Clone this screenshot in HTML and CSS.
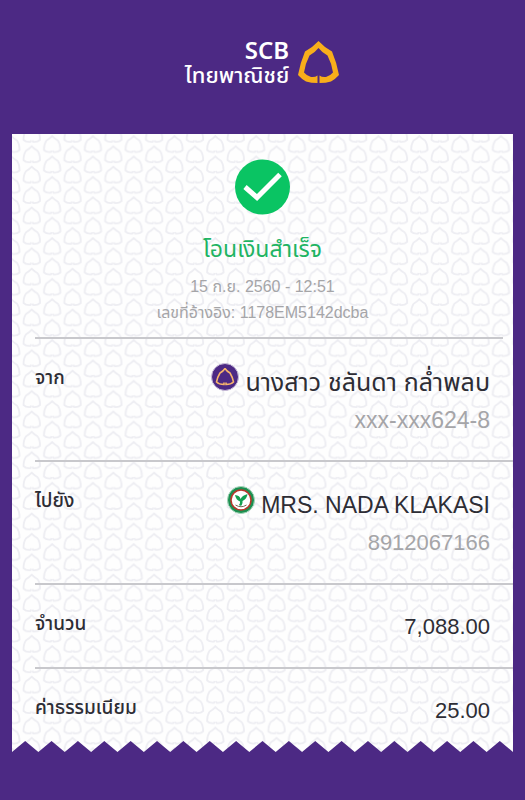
FILE: index.html
```html
<!DOCTYPE html>
<html lang="th">
<head>
<meta charset="utf-8">
<meta name="viewport" content="width=device-width, initial-scale=1">
<title>โอนเงินสำเร็จ</title>
<link rel="stylesheet" href="styles.css">
</head>
<body>
<header class="brand">
  <div class="brand-name">
    <span class="brand-en">SCB</span>
    <span class="brand-th">ไทยพาณิชย์</span>
  </div>
  <svg class="brand-mark" viewBox="0 0 42 42" aria-hidden="true">
    <path fill="#f8ae1b" d="M20.500 0Q14.500 6.500 7 10.500Q2.500 21 0 34Q3.500 38 8 40.500Q13 42 19.500 42V34.500Q17 36.500 13 36Q9 35 6 31.500Q7.500 22 11.500 14.500Q17 11.500 20.500 7Q24 11.500 29.500 14.500Q33.500 22 35 31.500Q32 35 28 36Q24 36.500 21.500 34.500V42Q28 42 33 40.500Q37.500 38 41 34Q38.500 21 34 10.500Q26.500 6.500 20.500 0Z"/>
  </svg>
</header>
<main class="slip">
  <svg class="slip-pattern" aria-hidden="true">
    <defs>
      <pattern id="leaves" width="40.8" height="20.4" patternUnits="userSpaceOnUse">
        <g fill="none" stroke="#ededf2" stroke-width="1.800" stroke-linejoin="round">
          <path id="leaf" d="M19 16.500L18.500 18Q14 18.500 11.500 16Q11.500 10 14 6.500Q17.500 4.500 19.700 2Q22 4.500 25.500 6.500Q28 10 28 16Q25.500 18.500 21 18L20.500 16.500" transform="translate(0 -10.200)"/>
          <use href="#leaf" y="20.4"/>
          <use href="#leaf" x="20.4" y="10.2"/>
          <use href="#leaf" x="-20.4" y="10.2"/>
          <use href="#leaf" x="20.4" y="30.6"/>
        </g>
      </pattern>
    </defs>
    <rect width="100%" height="100%" fill="url(#leaves)"/>
  </svg>
  <section class="status">
    <svg class="status-icon" viewBox="0 0 56 56" aria-hidden="true">
      <circle cx="27.500" cy="28" r="27.500" fill="#0ac463"/>
      <path d="M10 28L22 38.500L45 15.500" fill="none" stroke="#fff" stroke-width="5"/>
    </svg>
    <h1 class="status-title">โอนเงินสำเร็จ</h1>
    <p class="status-meta">15 ก.ย. 2560 - 12:51</p>
    <p class="status-meta">เลขที่อ้างอิง: 1178EM5142dcba</p>
  </section>
  <dl class="details">
    <div class="row row-party row-first">
      <dt class="label">จาก</dt>
      <dd class="value">
        <div class="party">
          <svg class="bank" viewBox="0 0 28 28" aria-hidden="true">
            <circle cx="14" cy="14" r="13.500" fill="#4c2984" stroke="#c9bdd8"/>
            <path d="M14 5.500Q12 8.500 9 10Q6.500 14 5.500 19Q8 21.500 13 21.500V19.500M14 5.500Q16 8.500 19 10Q21.500 14 22.500 19Q20 21.500 15 21.500V19.500" fill="none" stroke="#f6b36c" stroke-width="1.600"/>
          </svg>
          <span class="name-th">นางสาว ชลันดา กล่ำพลบ</span>
        </div>
        <div class="account">xxx-xxx624-8</div>
      </dd>
    </div>
    <div class="row row-party">
      <dt class="label">ไปยัง</dt>
      <dd class="value">
        <div class="party">
          <svg class="bank" viewBox="0 0 28 28" aria-hidden="true">
            <circle cx="14" cy="14" r="13.500" fill="#1b8f50" stroke="#a5d6ba"/>
            <circle cx="14" cy="14" r="10" fill="#fff" stroke="#b9362c" stroke-width="1.500"/>
            <path d="M8 9Q13 9.500 13.500 13Q15 9.500 20.500 8Q20 13 15.500 15Q16 17 14.500 19.500Q13 20 12 19Q13.500 17 13 15.500Q9 14 8 9Z" fill="#13a052"/>
            <path d="M8.500 19Q14 22.500 19.500 19" fill="none" stroke="#7a6656"/>
          </svg>
          <span>MRS. NADA KLAKASI</span>
        </div>
        <div class="account account-full">8912067166</div>
      </dd>
    </div>
    <div class="row">
      <dt class="label">จำนวน</dt>
      <dd class="value amount">7,088.00</dd>
    </div>
    <div class="row">
      <dt class="label">ค่าธรรมเนียม</dt>
      <dd class="value amount">25.00</dd>
    </div>
  </dl>
  <svg class="slip-edge" viewBox="0 0 38 2" preserveAspectRatio="none" aria-hidden="true">
    <path fill="#4c2984" d="M0 2L1 0L2 2L3 0L4 2L5 0L6 2L7 0L8 2L9 0L10 2L11 0L12 2L13 0L14 2L15 0L16 2L17 0L18 2L19 0L20 2L21 0L22 2L23 0L24 2L25 0L26 2L27 0L28 2L29 0L30 2L31 0L32 2L33 0L34 2L35 0L36 2L37 0L38 2Z"/>
  </svg>
</main>
</body>
</html>
```
FILE: styles.css
```css
* {
  box-sizing: border-box;
}

body {
  margin: 0;
  min-height: 100vh;
  padding: 0 12px;
  background: #4c2984;
  color: #2d2d35;
  font-family: "Liberation Sans", "Noto Sans Thai", "Noto Sans", sans-serif;
}

.brand {
  display: flex;
  justify-content: center;
  align-items: center;
  gap: 9px;
  height: 134px;
  padding-bottom: 10px;
  color: #fff;
}

.brand-name {
  display: flex;
  flex-direction: column;
  align-items: flex-end;
  font-family: "Noto Sans", "Noto Sans Thai", sans-serif;
  font-weight: 500;
}

.brand-en {
  font-size: 24px;
  font-weight: 600;
  line-height: 24px;
}

.brand-th {
  font-size: 22px;
  line-height: 24px;
}

.brand-mark {
  width: 42px;
  height: 42px;
}

.slip {
  position: relative;
  background: #fefefe;
}

.slip-pattern {
  position: absolute;
  inset: 0;
  width: 100%;
  height: 100%;
}

.status,
.details {
  position: relative;
}

.status {
  display: flex;
  flex-direction: column;
  align-items: center;
  padding-top: 25px;
  padding-bottom: 11px;
}

.status-icon {
  width: 56px;
  height: 56px;
}

.status-title {
  margin: 17px 0 8px;
  color: #1fb463;
  font-size: 23px;
  font-weight: 400;
  line-height: 34px;
}

.status-meta {
  margin: 0;
  color: #a5a5a8;
  font-size: 16px;
  line-height: 26px;
}

.details {
  margin: 0;
  padding-left: 23px;
}

.row {
  display: flex;
  justify-content: space-between;
  min-height: 84px;
  padding: 24px 23px 0 0;
  border-top: 2px solid #c8c8cc;
}

.row:last-child {
  min-height: 74px;
}

.row-party {
  min-height: 123px;
}

.row-first {
  border-image: linear-gradient(to right, #c8c8cc calc(100% - 12px), transparent 0) 2;
}

.label {
  font-size: 19px;
  font-weight: 500;
  line-height: 30px;
}

.value {
  margin: 0;
  font-size: 23px;
  line-height: 38px;
  text-align: right;
}

.party {
  display: flex;
  justify-content: flex-end;
  gap: 6px;
}

.name-th {
  font-size: 25px;
}

.bank {
  flex: none;
  width: 28px;
  height: 28px;
}

.account {
  color: #a5a5a8;
}

.account-full,
.amount {
  font-size: 22px;
}

.amount {
  line-height: 36px;
}

.slip-edge {
  position: relative;
  display: block;
  width: 100%;
  height: 11px;
}
```
